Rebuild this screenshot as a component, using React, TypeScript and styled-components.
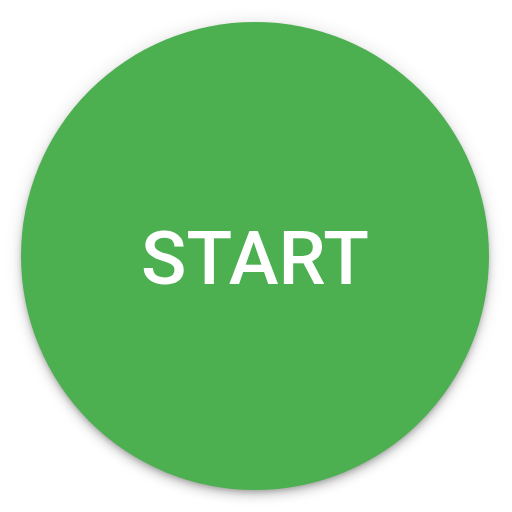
import React from "react";
import styled, { createGlobalStyle } from "styled-components";

const GlobalStyle = createGlobalStyle`
  html, body {
    margin: 0;
    padding: 0;
    background: #ffffff;
  }
`;

const Page = styled.div`
  width: 512px;
  height: 512px;
  display: flex;
  align-items: center;
  justify-content: center;
`;

const StartButton = styled.button`
  width: 468px;
  height: 468px;
  border: none;
  border-radius: 50%;
  background: #4caf50;
  color: #ffffff;
  font-family: Roboto, "Noto Sans", sans-serif;
  font-weight: 500;
  font-size: 75px;
  letter-spacing: 0;
  display: flex;
  align-items: center;
  justify-content: center;
  padding: 4px 0 0 0;
  margin-left: -2px;
  cursor: pointer;
  box-shadow: 0 3px 5px -1px rgba(0, 0, 0, 0.2), 0 6px 10px 0 rgba(0, 0, 0, 0.14),
    0 1px 18px 0 rgba(0, 0, 0, 0.12);
`;

const App: React.FC = () => {
  return (
    <>
      <GlobalStyle />
      <Page>
        <StartButton type="button">START</StartButton>
      </Page>
    </>
  );
};

export default App;
